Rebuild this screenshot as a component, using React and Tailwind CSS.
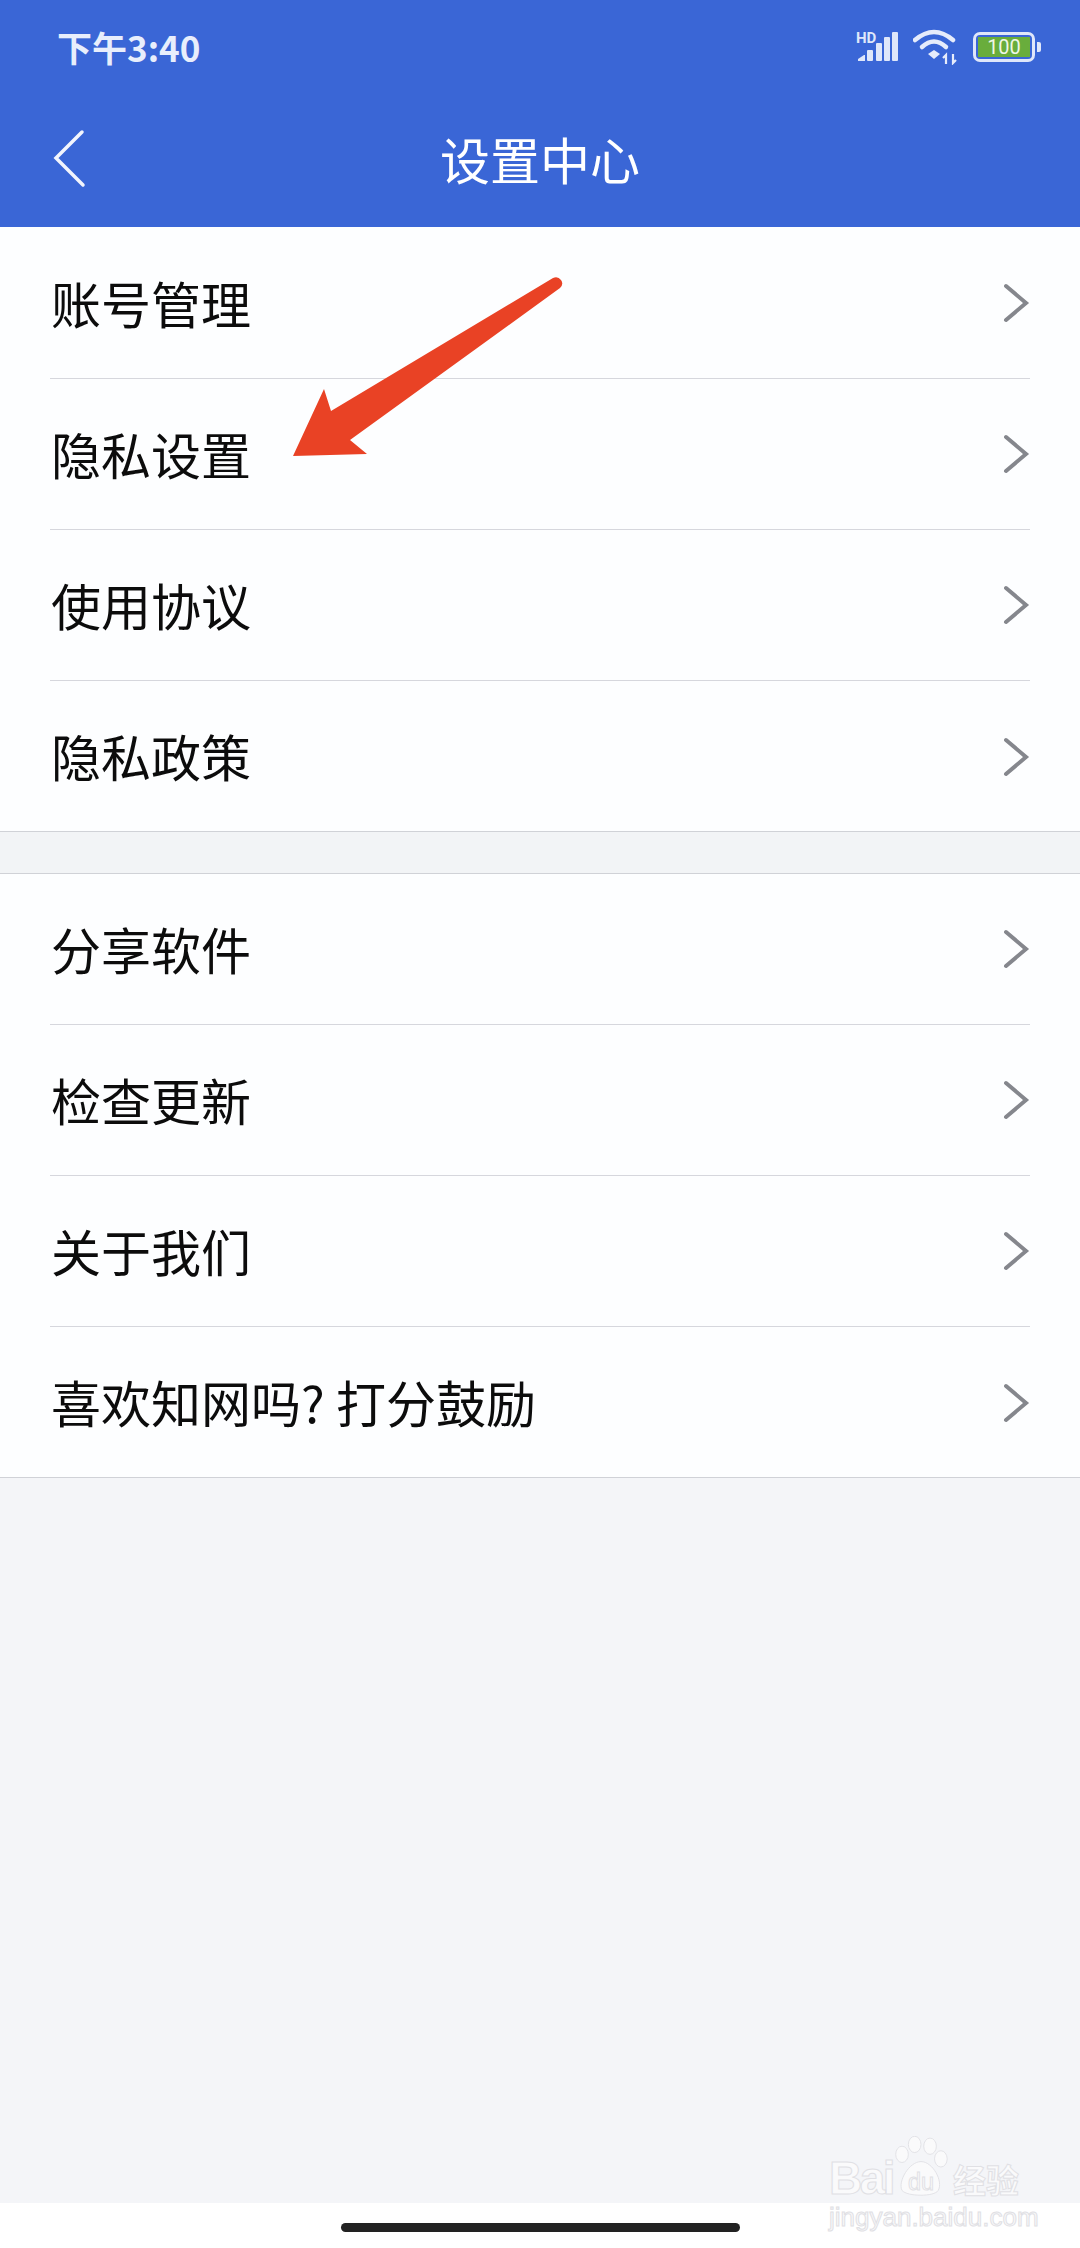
const cjk = "font-['Noto_Sans_CJK_SC','Noto_Sans',sans-serif]";

const groupOne = ["账号管理", "隐私设置", "使用协议", "隐私政策"];
const groupTwo = ["分享软件", "检查更新", "关于我们", "喜欢知网吗? 打分鼓励"];

function Chevron() {
  return (
    <svg width="28" height="42" viewBox="0 0 28 42" fill="none" className="shrink-0">
      <path d="M4 4 L24 21 L4 38" stroke="#85878d" strokeWidth="4" strokeLinecap="round" strokeLinejoin="miter" />
    </svg>
  );
}

function Row({ label, last }) {
  return (
    <div className={`flex h-[151px] items-center justify-between ml-[50px] mr-[50px] ${last ? "" : "border-b border-[#d6d7dd]"}`}>
      <span className="mb-[3px] ml-[1px] text-[50px] leading-none text-[#0c0c0c]">{label}</span>
      <Chevron />
    </div>
  );
}

function Group({ items, className }) {
  return (
    <section className={`h-[605px] bg-[#fdfeff] ${className}`}>
      {items.map((item, i) => (
        <Row key={item} label={item} last={i === items.length - 1} />
      ))}
    </section>
  );
}

function StatusIcons() {
  return (
    <div className="flex items-center">
      <svg width="43" height="34" viewBox="0 0 43 34" className="mr-[14px]">
        <text x="0" y="12.5" fontSize="15" fontWeight="700" fill="#dfe7fa" fontFamily="Roboto, sans-serif">HD</text>
        <path d="M2 31 L2 29 L8 25 L9 25 L9 31 Z" fill="#dfe7fa" />
        <rect x="11" y="20" width="6" height="11" rx="1" fill="#dfe7fa" />
        <rect x="20" y="13" width="6" height="18" rx="1" fill="#dfe7fa" />
        <rect x="28" y="7" width="6" height="24" rx="1" fill="#dfe7fa" />
        <rect x="36" y="2" width="6" height="29" rx="1" fill="#dfe7fa" />
      </svg>
      <svg width="46" height="36" viewBox="0 0 46 36" fill="none" className="mr-[14px]">
        <path d="M2 11 Q21 -5 40 11" stroke="#e6ecfb" strokeWidth="4.5" strokeLinecap="round" />
        <path d="M9 18 Q21 7 33 18" stroke="#e6ecfb" strokeWidth="4.5" strokeLinecap="round" />
        <path d="M15 25 L21 21 L27 25 L21 30 Z" fill="#e6ecfb" />
        <path d="M33 35 V26 L30 29 M40 25 V34 L43 31" stroke="#e6ecfb" strokeWidth="2.2" />
      </svg>
      <div className="flex h-[30px] w-[62px] items-center justify-center rounded-[7px] border-[3px] border-[#dfe7fa] p-[2px]">
        <div className="flex h-full w-full items-center justify-center bg-[#69ad3c] text-[20px] leading-none text-[#eef6e6] font-['Roboto',sans-serif]">100</div>
      </div>
      <div className="ml-[2px] h-[10px] w-[4px] rounded-r-[2px] bg-[#dfe7fa]" />
    </div>
  );
}

function Arrow() {
  return (
    <svg width="1080" height="500" viewBox="0 0 1080 500" className="pointer-events-none absolute left-0 top-0">
      <path
        d="M293 456 L324 389 L331 411 L553 278 Q558 276 561 280 Q564 284 560 288 L350 440 L367 454 Z"
        fill="#e94225"
      />
    </svg>
  );
}

function Watermark() {
  const outline = "text-[#fafafb] [-webkit-text-stroke:1px_#e0e0e4]";
  return (
    <div className="pointer-events-none absolute left-[829px] top-[2130px] flex w-[195px] flex-col">
      <div className="flex h-[68px] items-end">
        <span className={`text-[46px] font-bold leading-[40px] tracking-[-2.5px] font-['Liberation_Sans',sans-serif] ${outline}`}>Bai</span>
        <svg width="56" height="62" viewBox="0 0 62 68" className="shrink-0">
          <g fill="#fafafb" stroke="#e0e0e4" strokeWidth="1">
            <ellipse cx="10" cy="20" rx="7" ry="9" />
            <ellipse cx="24" cy="9" rx="7" ry="9" />
            <ellipse cx="41" cy="11" rx="7" ry="9" />
            <ellipse cx="53" cy="25" rx="7" ry="9" />
            <path d="M31 28 C44 28 56 50 50 60 C46 67 16 67 10 60 C5 50 18 28 31 28 Z" />
          </g>
          <text x="31" y="59" textAnchor="middle" fontSize="26" fill="#fafafb" stroke="#e0e0e4" strokeWidth="1" fontFamily="Liberation Sans, sans-serif">du</text>
        </svg>
        <span className={`ml-[4px] text-[33px] font-bold leading-[38px] whitespace-nowrap ${outline}`}>经验</span>
      </div>
      <span className={`mt-[6px] text-[26px] leading-[26px] whitespace-nowrap font-['Liberation_Sans',sans-serif] ${outline}`}>jingyan.baidu.com</span>
    </div>
  );
}

export default function App() {
  return (
    <div className={`relative flex h-[2248px] w-[1080px] flex-col overflow-hidden bg-[#f4f5f8] ${cjk}`}>
      <header className="h-[227px] shrink-0 bg-[#3a66d6]">
        <div className="flex h-[94px] items-center justify-between pl-[57px] pr-[39px]">
          <span className="mb-[2px] text-[35px] font-bold leading-none text-[#e8eefc]">下午3:40</span>
          <StatusIcons />
        </div>
        <div className="relative flex h-[133px] items-center justify-center pb-[5px]">
          <svg width="36" height="60" viewBox="0 0 36 60" fill="none" className="absolute left-[52px] top-[35px]">
            <path d="M30 3 L4 29 L31 56" stroke="#f2f5fd" strokeWidth="3.5" strokeLinecap="round" />
          </svg>
          <h1 className="text-[50px] font-normal leading-none text-white">设置中心</h1>
        </div>
      </header>

      <main className="flex-1">
        <Group items={groupOne} className="border-b border-[#d0d2d7] pt-[1px]" />
        <div className="h-[41px] bg-[#f2f4f6]" />
        <Group items={groupTwo} className="border-y border-[#d0d2d7]" />
      </main>

      <footer className="flex h-[45px] shrink-0 items-center justify-center bg-white pt-[4px]">
        <div className="h-[9px] w-[399px] rounded-full bg-[#222222]" />
      </footer>

      <Arrow />
      <Watermark />
    </div>
  );
}
